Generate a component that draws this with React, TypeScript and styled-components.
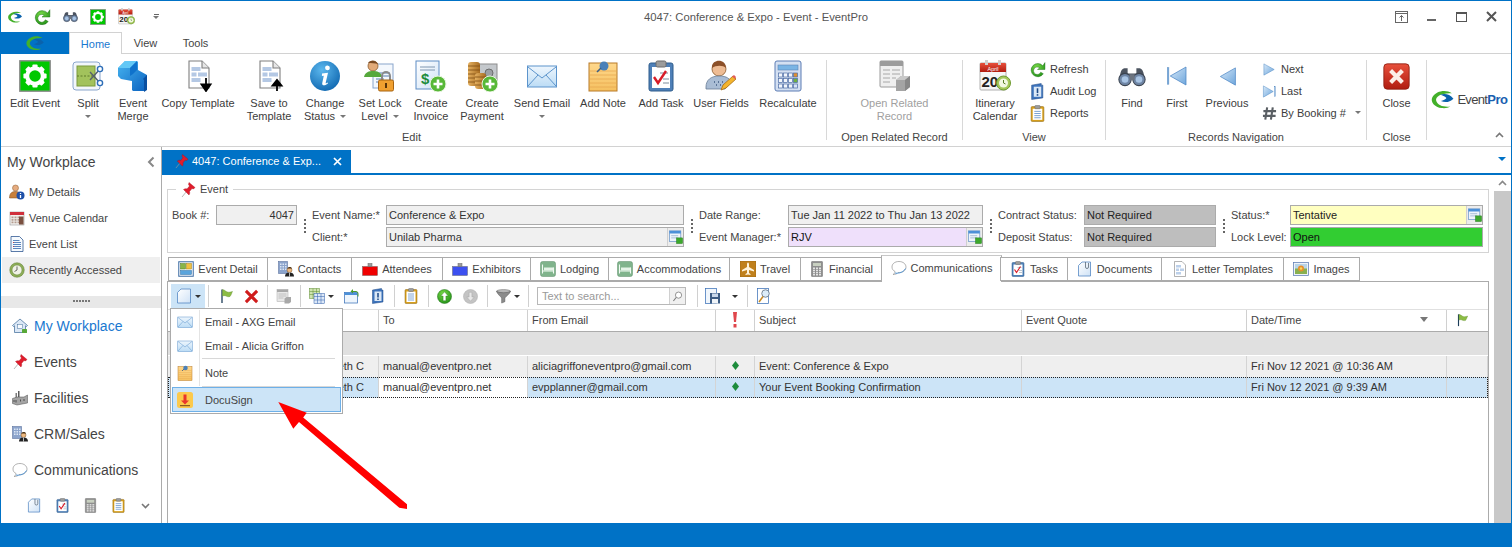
import React from "react";
import styled, { createGlobalStyle } from "styled-components";

const BLUE = "#0072c6";
const TEXT = "#3c3c3c";
const LINE = "#ababab";

const Global = createGlobalStyle`
  html, body { margin: 0; padding: 0; width: 1512px; height: 547px; overflow: hidden; background: #fff; }
  body { font-family: "Liberation Sans", Arial, sans-serif; font-size: 11px; color: ${TEXT}; }
  * { box-sizing: border-box; }
  svg { display: block; flex: none; }
`;

/* ---------- shared svg wrapper ---------- */
type IP = { s?: number };
const V: React.FC<{ s?: number; children: React.ReactNode }> = ({ s = 32, children }) => (
  <svg width={s} height={s} viewBox="0 0 32 32">{children}</svg>
);

const Defs = styled.svg`position: absolute; width: 0; height: 0;`;
const GradientDefs = () => (
  <Defs>
    <defs>
      <linearGradient id="gTri" x1="0" y1="0" x2="1" y2="1"><stop offset="0" stopColor="#d6e8f8" /><stop offset="1" stopColor="#6ea6dc" /></linearGradient>
      <linearGradient id="gMail" x1="0" y1="0" x2="0" y2="1"><stop offset="0" stopColor="#eef6fd" /><stop offset="1" stopColor="#bcdcf5" /></linearGradient>
      <linearGradient id="gNote" x1="0" y1="0" x2="0" y2="1"><stop offset="0" stopColor="#ffd88c" /><stop offset="1" stopColor="#f5c060" /></linearGradient>
      <radialGradient id="gInfo" cx=".4" cy=".3" r=".8"><stop offset="0" stopColor="#5cb8ee" /><stop offset="1" stopColor="#0a62ac" /></radialGradient>
      <radialGradient id="gGreen" cx=".4" cy=".3" r=".8"><stop offset="0" stopColor="#78d848" /><stop offset="1" stopColor="#1d8c14" /></radialGradient>
      <linearGradient id="gRed" x1="0" y1="0" x2="0" y2="1"><stop offset="0" stopColor="#e8503c" /><stop offset="1" stopColor="#b01c10" /></linearGradient>
      <linearGradient id="gCube" x1="0" y1="0" x2="1" y2="1"><stop offset="0" stopColor="#46b4f0" /><stop offset="1" stopColor="#0b62c0" /></linearGradient>
      <linearGradient id="gDoc" x1="0" y1="0" x2="1" y2="1"><stop offset="0" stopColor="#ffffff" /><stop offset="1" stopColor="#cfe2f6" /></linearGradient>
      <linearGradient id="gGold" x1="0" y1="0" x2="1" y2="0"><stop offset="0" stopColor="#e4b060" /><stop offset="1" stopColor="#a86c20" /></linearGradient>
    </defs>
  </Defs>
);

/* ---------- icons ---------- */
const GearBox = ({ s = 32 }: IP) => (
  <V s={s}>
    <rect x=".8" y=".8" width="30.4" height="30.4" fill="#00c800" stroke="#8c8c8c" strokeWidth="1.4" />
    <g fill="#fff">
      {[0, 45, 90, 135, 180, 225, 270, 315].map((a) => (
        <rect key={a} x="13.4" y="4.4" width="5.2" height="6" rx="1" transform={`rotate(${a} 16 16)`} />
      ))}
    </g>
    <circle cx="16" cy="16" r="7.8" fill="#00c800" stroke="#fff" strokeWidth="4" />
  </V>
);
const Swirl = ({ s = 32 }: IP) => (
  <V s={s}>
    <path d="M28 8C20 3 8 5 3 13c-3 6 3 13 12 14 4 .5 8 0 11-2-8 1-16-1-18-7C6 12 16 7 28 8Z" fill="#43b02a" />
    <path d="M13 10c6-2 12-1 17 5-5 5-11 5-16 3 3-1 6-2 7-4-2-2-5-3-8-4Z" fill="#0a62ac" />
  </V>
);
const Split = ({ s = 32 }: IP) => (
  <V s={s}>
    <rect x="1" y="2" width="27" height="28" rx="3" fill="#f2f6fb" stroke="#8aa6cc" />
    <rect x="5" y="6" width="18" height="20" fill="#a2c25c" stroke="#7b9a3c" />
    <path d="M5 16h18" stroke="#5d7a28" strokeDasharray="2 1.5" />
    <path d="M18 20 29 8M18 12l11 12" stroke="#55606c" strokeWidth="1.4" />
    <circle cx="28" cy="9" r="2.6" fill="#fff" stroke="#2f6fb8" strokeWidth="1.4" />
    <circle cx="28" cy="23" r="2.6" fill="#fff" stroke="#2f6fb8" strokeWidth="1.4" />
  </V>
);
const Merge = ({ s = 32 }: IP) => (
  <V s={s}>
    <path d="M1 8l7-7h12l1 1v8l9 5v14l-3 2H16l-1-1v-9L4 19 1 16Z" fill="url(#gCube)" />
    <path d="M1 8l7-7h12l-7 7Z" fill="#62c8f6" />
    <path d="M13 8l7-7v9l-4 4-3 2Z" fill="#0f72cc" />
    <path d="M26 19l4-4v15l-3 2V20Z" fill="#0a4fa0" />
  </V>
);
const TemplateDoc = ({ s = 32, up }: IP & { up?: boolean }) => (
  <V s={s}>
    <path d="M7 1h13l7 7v20H7Z" fill="#fff" stroke="#7f7f7f" strokeWidth="1.1" />
    <path d="M20 1v7h7" fill="#e6e6e6" stroke="#7f7f7f" strokeWidth="1.1" />
    <path d="M9.5 7h9v4h-9ZM9.5 12.5h5v4h-5ZM16 12.5h9v4h-9ZM9.5 18h9v4h-9Z" fill="#b4c8e4" />
    <path d={up ? "M24 31V21M19.5 25.5 24 20l4.5 5.5Z" : "M24 18v10M19.5 24.5 24 31l4.5-6.5Z"} stroke="#000" strokeWidth="1.8" fill="#000" />
  </V>
);
const InfoBall = ({ s = 32 }: IP) => (
  <V s={s}>
    <circle cx="16" cy="16" r="15" fill="url(#gInfo)" />
    <path d="M18.5 5.5a2.4 2.4 0 1 1-.1 4.8 2.4 2.4 0 0 1 .1-4.8ZM13 13.6l6-.9-2.3 10c-.2.9.5 1 1.8-.1l.6.7c-2.3 2.4-6.3 3.1-5.9 0l1.6-7.5-1.900.1Z" fill="#fff" />
  </V>
);
const LockDoc = ({ s = 32 }: IP) => (
  <V s={s}>
    <rect x="9" y="4" width="20" height="24" fill="#f4f8fd" stroke="#8aa6cc" />
    <path d="M12 13h14M12 16h14M12 19h8M12 22h8" stroke="#5a7fb0" />
    <circle cx="9" cy="6" r="5" fill="#e2aa78" stroke="#8b5a2b" strokeWidth=".8" />
    <path d="M4 3c2-3 8-3 10 1-3-1-7-1-10-1Z" fill="#7a4a22" />
    <path d="M0 17c1-5 5-6 9-6s8 1 9 6Z" fill="#56a83c" />
    <path d="M18 20v-4a4 4 0 0 1 8 0v4" fill="none" stroke="#8a8a8a" strokeWidth="2" />
    <rect x="14.5" y="20" width="15" height="11" rx="1.5" fill="#f0a030" stroke="#a86410" />
    <rect x="21" y="23" width="2" height="5" fill="#5a3408" />
  </V>
);
const DollarDoc = ({ s = 32 }: IP) => (
  <V s={s}>
    <rect x="1" y="1" width="23" height="28" fill="url(#gDoc)" stroke="#5c8cc4" />
    <path d="M5 7h15M5 10h15" stroke="#7f96b0" />
    <text x="6" y="24" fontFamily="Liberation Sans" fontWeight="700" fontSize="15" fill="#1d8c3c">$</text>
    <circle cx="23" cy="24" r="8" fill="#58b838" stroke="#e8f4e0" />
    <path d="M23 19.5v9M18.5 24h9" stroke="#fff" strokeWidth="2.6" />
  </V>
);
const Coins = ({ s = 32 }: IP) => (
  <V s={s}>
    <rect x="13" y="4" width="18" height="20" fill="#c4c8cc" stroke="#8c8c8c" />
    <circle cx="23" cy="13" r="4" fill="#9ca0a4" stroke="#6c6c6c" />
    <rect x="2" y="2" width="12" height="24" rx="3" fill="url(#gGold)" />
    <path d="M2 6h12M2 10h12M2 14h12M2 18h12M2 22h12" stroke="#7d4c12" strokeWidth=".8" />
    <rect x="9" y="13" width="11" height="16" rx="3" fill="url(#gGold)" />
    <path d="M9 17h11M9 21h11M9 25h11" stroke="#7d4c12" strokeWidth=".8" />
    <circle cx="24" cy="24" r="8" fill="#58b838" stroke="#e8f4e0" />
    <path d="M24 19.5v9M19.5 24h9" stroke="#fff" strokeWidth="2.6" />
  </V>
);
const Envelope = ({ s = 32 }: IP) => (
  <V s={s}>
    <rect x="1.5" y="6" width="29" height="21" fill="url(#gMail)" stroke="#5c94cc" />
    <path d="M2 7l14 11L30 7M2 26l10-11M30 26 20 15" fill="none" stroke="#5c94cc" />
  </V>
);
const Note = ({ s = 32 }: IP) => (
  <V s={s}>
    <rect x="2" y="3" width="28" height="28" fill="url(#gNote)" stroke="#b87a28" />
    <path d="M3 11h26M3 15h26M3 19h26M3 23h26M3 27h26" stroke="#e8a850" strokeWidth=".8" />
    <circle cx="17" cy="6" r="4.5" fill="#4a80b8" />
    <path d="M14 8l-4 4" stroke="#3a5e86" strokeWidth="1.6" />
  </V>
);
const Clipboard = ({ s = 32, check }: IP & { check?: boolean }) => (
  <V s={s}>
    <rect x="4" y="3" width="24" height="28" rx="2" fill={check ? "#4f80b8" : "#d8a01c"} stroke={check ? "#2f5c8c" : "#8c6410"} />
    <rect x="7" y="7" width="18" height="21" fill="#fff" />
    <rect x="11" y="1" width="10" height="6" rx="1.5" fill="#9c9c9c" stroke="#6c6c6c" />
    {check ? (
      <>
        <path d="M15 13h8M18 19h6M18 23h6" stroke="#7c8c9c" />
        <path d="M9 17l4 6 8-12" fill="none" stroke="#d81c28" strokeWidth="2.4" />
      </>
    ) : (
      <path d="M10 12h12M10 16h12M10 20h12M10 24h12" stroke="#5a8cc8" strokeWidth="1.5" />
    )}
  </V>
);
const UserPencil = ({ s = 32 }: IP) => (
  <V s={s}>
    <circle cx="14" cy="9" r="7" fill="#eebc94" stroke="#8b5a2b" strokeWidth=".8" />
    <path d="M7 8c-1-9 14-10 14 0-3-3-10-3-14 0Z" fill="#8c5028" />
    <path d="M1 27c0-7 5-11 13-11s11 3 12 6l-6 7H1Z" fill="#a9bcd4" stroke="#687c96" strokeWidth=".8" />
    <path d="M9 22h1M13 22h1M17 22h1M11 25h1M15 25h1" stroke="#3f5a80" strokeWidth="1.4" />
    <path d="M16 30l2-5 10-9 3 3-10 9Z" fill="#f4b42c" stroke="#a86c10" strokeWidth=".8" />
    <path d="M27 16.5l2-1.5 2 2-1 2Z" fill="#e05c5c" />
  </V>
);
const Calculator = ({ s = 32 }: IP) => (
  <V s={s}>
    <rect x="3" y="1" width="26" height="30" rx="2" fill="#d4e0f2" stroke="#5c7cb4" />
    <rect x="6" y="5" width="20" height="5" fill="#7ab4e4" stroke="#5c84b4" strokeWidth=".6" />
    {[0, 1, 2, 3].map((c) => [0, 1, 2].map((r) => (
      <rect key={`${c}${r}`} x={6.5 + c * 5} y={13 + r * 5.5} width="4" height="4" fill={c === 3 ? (r === 0 ? "#e09030" : r === 1 ? "#70b040" : "#d8e4f4") : "#f2f6fc"} stroke="#4c6ca4" strokeWidth=".7" />
    )))}
  </V>
);
const RelatedRecord = ({ s = 32 }: IP) => (
  <V s={s}>
    <rect x="1" y="1" width="23" height="26" rx="1" fill="#efefef" stroke="#9a9a9a" />
    <rect x="1" y="1" width="23" height="5" fill="#9c9c9c" />
    <path d="M4 10h7M13 10h8M4 14h7M13 14h8M4 18h7M13 18h4M4 22h7" stroke="#a8a8a8" />
    <path d="M17 20l5-4h9v11l-5 4h-9Z" fill="#a4a4a4" />
    <path d="M17 20l5-4h9l-5 4Z" fill="#c8c8c8" />
    <path d="M26 20l5-4v11l-5 4Z" fill="#888" />
  </V>
);
const CalendarClock = ({ s = 32 }: IP) => (
  <V s={s}>
    <rect x="1" y="3" width="26" height="27" rx="1" fill="#f6f6f6" stroke="#b0b0b0" />
    <path d="M1 4a1 1 0 0 1 1-1h24a1 1 0 0 1 1 1v8H1Z" fill="url(#gRed)" />
    <rect x="6" y="0" width="3" height="5" fill="#d0d0d0" />
    <rect x="19" y="0" width="3" height="5" fill="#d0d0d0" />
    <text x="14" y="11" fontFamily="Liberation Sans" fontSize="5.5" fill="#fff" textAnchor="middle">April</text>
    <text x="2.5" y="27" fontFamily="Liberation Sans" fontWeight="700" fontSize="15" fill="#222">20</text>
    <circle cx="24.5" cy="23" r="7" fill="#a4c85c" stroke="#6f9a30" />
    <circle cx="24.5" cy="23" r="4.5" fill="#f2f8e4" />
    <path d="M24.5 20v3l2 1" stroke="#5a7f28" fill="none" />
  </V>
);
const Refresh = ({ s = 32 }: IP) => (
  <V s={s}>
    <path d="M26 9A12.500 12.500 0 1 0 27 24l-5-3a7 7 0 1 1-2-8l-4 3h14V3l-4 6Z" fill="url(#gGreen)" stroke="#146a10" strokeWidth=".8" />
  </V>
);
const AuditBook = ({ s = 32 }: IP) => (
  <V s={s}>
    <path d="M5 4l18-3v3h3v24l-21 3Z" fill="#3e74bc" stroke="#1c4886" />
    <rect x="9" y="7" width="14" height="19" fill="#dbe8f6" />
    <path d="M16 10v9" stroke="#1c4886" strokeWidth="3" />
    <path d="M16 21v3" stroke="#1c4886" strokeWidth="3" />
  </V>
);
const Binoculars = ({ s = 32 }: IP) => (
  <V s={s}>
    <path d="M3 12c1-4 3-5 5-5h3v6h10V7h3c2 0 4 1 5 5l2 8H1Z" fill="#4c5460" />
    <circle cx="8" cy="20" r="7" fill="#6f86a6" stroke="#3c4450" strokeWidth="1.2" />
    <circle cx="24" cy="20" r="7" fill="#6f86a6" stroke="#3c4450" strokeWidth="1.2" />
    <circle cx="8" cy="20" r="3.8" fill="#a8c4e4" />
    <circle cx="24" cy="20" r="3.8" fill="#a8c4e4" />
    <rect x="13" y="14" width="6" height="7" fill="#6c7480" />
  </V>
);
const Tri = ({ s = 32, dir, bar }: IP & { dir: "l" | "r"; bar?: boolean }) => (
  <V s={s}>
    {dir === "l" ? (
      <>
        {bar && <rect x="3" y="5" width="2.2" height="22" fill="#7eacdc" stroke="#4c82bc" strokeWidth=".5" />}
        <path d={bar ? "M7 16 28 4v24Z" : "M6 16 27 4v24Z"} fill="url(#gTri)" stroke="#4c86c4" />
      </>
    ) : (
      <>
        {bar && <rect x="26.5" y="5" width="2.2" height="22" fill="#7eacdc" stroke="#4c82bc" strokeWidth=".5" />}
        <path d={bar ? "M3 4l21 12L3 28Z" : "M4 4l22 12L4 28Z"} fill="url(#gTri)" stroke="#4c86c4" />
      </>
    )}
  </V>
);
const Hash = ({ s = 32 }: IP) => (
  <V s={s}>
    <path d="M11 3 7 29M23 3l-4 26M3 11h27M2 21h27" stroke="#5a5f64" strokeWidth="4.5" />
  </V>
);
const CloseBox = ({ s = 32 }: IP) => (
  <V s={s}>
    <rect x="1" y="1" width="30" height="30" rx="4" fill="url(#gRed)" stroke="#8c1c10" />
    <path d="M9 9l14 14M23 9 9 23" stroke="#fbeee8" strokeWidth="5" />
  </V>
);
const Pin = ({ s = 32 }: IP) => (
  <V s={s}>
    <path d="M4 30l9-11" stroke="#9a9a9a" strokeWidth="1.4" />
    <path d="M18 1l12 10-3 3-3-1-5 6c1 3 0 5-1 7L7 15c3-2 5-2 7-1l5-6-2-3Z" fill="#e01c2c" stroke="#a80c18" strokeWidth=".8" />
  </V>
);
const PersonInfo = ({ s = 32 }: IP) => (
  <V s={s}>
    <circle cx="13" cy="8" r="6" fill="#e6ac80" stroke="#8b5a2b" />
    <path d="M1 28c0-10 5-13 12-13 4 0 7 1 9 4v9Z" fill="#c8803c" stroke="#7c4c1c" />
    <circle cx="23" cy="23" r="8" fill="#1e50a8" />
    <path d="M23 18v2M23 22v6" stroke="#fff" strokeWidth="2.6" />
  </V>
);
const VenueCal = ({ s = 32 }: IP) => (
  <V s={s}>
    <rect x="2" y="4" width="28" height="26" fill="#f2f0ee" stroke="#888" />
    <rect x="2" y="4" width="28" height="6" fill="#d0303c" />
    {[8, 14, 20].map((x) => [13, 18, 23].map((y) => <rect key={`${x}${y}`} x={x - 3} y={y} width="4" height="3.5" fill="#b49c90" />))}
    <rect x="20" y="13" width="9" height="16" fill="#7a5040" />
  </V>
);
const ListDoc = ({ s = 32 }: IP) => (
  <V s={s}>
    <path d="M4 1h17l7 7v23H4Z" fill="#f6fafe" stroke="#25508c" strokeWidth="1.5" />
    <path d="M8 9h13M8 13h16M8 17h16M8 21h16M8 25h16" stroke="#2a5fa8" strokeWidth="1.5" />
    <path d="M8 13h2M8 21h2" stroke="#d0282c" strokeWidth="1.5" />
  </V>
);
const ClockRing = ({ s = 32 }: IP) => (
  <V s={s}>
    <circle cx="16" cy="16" r="14.5" fill="#8eae58" stroke="#5c7c30" />
    <circle cx="16" cy="16" r="10" fill="#f0f2e6" stroke="#5c7c30" />
    <path d="M16 9v7l-5 3" fill="none" stroke="#444" strokeWidth="1.6" />
  </V>
);
const House = ({ s = 32 }: IP) => (
  <V s={s}>
    <path d="M1 15 16 2l15 13-2 2-2-1.5V29H5V15.5L3 17Z" fill="#dce8f6" stroke="#44709c" strokeWidth="1.5" />
    <rect x="11" y="13" width="10" height="8" fill="#f8fbfe" stroke="#44709c" />
    <rect x="20" y="22" width="10" height="8" rx="1" fill="#58a838" />
  </V>
);
const Factory = ({ s = 32 }: IP) => (
  <V s={s}>
    <rect x="12" y="2" width="3" height="14" fill="#5c5c5c" />
    <rect x="7" y="6" width="3" height="10" fill="#7c7c7c" />
    <path d="M1 17 10 14h14l7-4v16L10 30 1 27Z" fill="#a4a4a4" stroke="#4c4c4c" />
    <path d="M4 20v4M8 20v5M17 19v4M24 18v4" stroke="#333" strokeWidth="1.5" />
  </V>
);
const Crm = ({ s = 32 }: IP) => (
  <V s={s}>
    <rect x="1" y="1" width="18" height="24" fill="#8ca4cc" stroke="#4c6494" />
    {[4, 9, 14].map((x) => [5, 10, 15].map((y) => <rect key={`${x}${y}`} x={x} y={y} width="3" height="3" fill="#dce6f4" />))}
    <circle cx="23" cy="18" r="5" fill="#ecb880" stroke="#7c5428" />
    <path d="M19 15c1-4 8-4 9 0Z" fill="#4c3418" />
    <path d="M14 31c0-5 3-8 9-8s9 3 9 8Z" fill="#222" />
    <path d="M23 23v8" stroke="#fff" strokeWidth="1.4" />
  </V>
);
const Bubble = ({ s = 32 }: IP) => (
  <V s={s}>
    <path d="M16 3C7 3 2 8 2 14c0 4 2 7 6 9 0 3-2 5-4 6 4 0 8-1 10-4 1 0 2 0 3 0 8 0 13-5 13-11S24 3 16 3Z" fill="#fff" stroke="#8a8a8a" strokeWidth="1.3" />
    <path d="M8 26c4 1 15 1 21-9" fill="none" stroke="#3a8cd8" strokeWidth="1.6" />
  </V>
);
const PageClip = ({ s = 32 }: IP) => (
  <V s={s}>
    <path d="M3 9l7-7h17v28H3Z" fill="url(#gDoc)" stroke="#4c82c0" strokeWidth="1.5" />
    <path d="M17 2v10a3 3 0 0 0 6 0V4" fill="none" stroke="#52606e" strokeWidth="1.5" />
  </V>
);
const BlankPage = ({ s = 32 }: IP) => (
  <V s={s}>
    <path d="M3 9l7-7h19v28H3Z" fill="url(#gDoc)" stroke="#4c82c0" strokeWidth="1.5" />
  </V>
);
const CalcGrey = ({ s = 32 }: IP) => (
  <V s={s}>
    <rect x="5" y="1" width="22" height="30" rx="1" fill="#8e8e8e" stroke="#6c6c6c" />
    <rect x="8" y="4" width="16" height="6" fill="#c8d0c0" />
    {[0, 1, 2].map((c) => [0, 1, 2, 3].map((r) => (
      <rect key={`${c}${r}`} x={8 + c * 6} y={13 + r * 4.3} width="4" height="3" fill="#e4e4e4" />
    )))}
  </V>
);
const DetailPanel = ({ s = 32 }: IP) => (
  <V s={s}>
    <rect x="1.5" y="1.5" width="29" height="29" fill="#f6f8fb" stroke="#3f6ea4" strokeWidth="2" />
    <rect x="5" y="5" width="10" height="11" fill="#88b448" stroke="#4c7c20" />
    <rect x="17" y="5" width="10" height="11" fill="#f0c040" stroke="#a88010" />
    <rect x="5" y="19" width="22" height="8" fill="#5aa4dc" stroke="#2c70a8" />
  </V>
);
const Badge = ({ s = 32, color }: IP & { color: string }) => (
  <V s={s}>
    <rect x="1" y="11" width="30" height="18" fill={color} stroke="#555" strokeWidth=".8" />
    <rect x="12" y="5" width="8" height="6" fill="#9c9c9c" stroke="#666" />
  </V>
);
const BedGreen = ({ s = 32 }: IP) => (
  <V s={s}>
    <rect x="1" y="1" width="30" height="30" rx="4" fill="#80b48c" stroke="#5c8c68" />
    <path d="M5 7v18M27 13v12M5 20h22" stroke="#f2fbf4" strokeWidth="2.2" />
    <rect x="8" y="13" width="19" height="6" fill="#e6f4e8" />
  </V>
);
const Plane = ({ s = 32 }: IP) => (
  <V s={s}>
    <rect x="0" y="0" width="32" height="32" fill="#c0801c" stroke="#8c5c10" />
    <path d="M16 3c1.5 0 2 2 2 4v5l10 6v3l-10-3v6l3 2v2l-5-1-5 1v-2l3-2v-6L4 21v-3l10-6V7c0-2 .5-4 2-4Z" fill="#fff4dc" />
  </V>
);
const LetterDoc = ({ s = 32 }: IP) => (
  <V s={s}>
    <path d="M5 1h15l7 7v23H5Z" fill="#fff" stroke="#8a8a8a" strokeWidth="1.3" />
    <path d="M8 8h10v5H8ZM8 15h6v5H8ZM16 15h8v5h-8ZM8 22h10v5H8Z" fill="#bcd0ea" />
  </V>
);
const Picture = ({ s = 32 }: IP) => (
  <V s={s}>
    <rect x="1" y="3" width="30" height="26" fill="#eef2f8" stroke="#5c7cb4" strokeWidth="1.5" />
    <rect x="4" y="6" width="24" height="20" fill="#88b050" />
    <rect x="4" y="6" width="24" height="9" fill="#b8d4e8" />
    <circle cx="16" cy="15" r="6" fill="#e8902c" />
    <circle cx="16" cy="15" r="2.5" fill="#f8d860" />
  </V>
);
const TableGrey = ({ s = 32 }: IP) => (
  <V s={s}>
    <rect x="2" y="3" width="22" height="24" fill="#e8e8e8" stroke="#a8a8a8" />
    <rect x="2" y="3" width="22" height="5" fill="#a8a8a8" />
    <path d="M5 12h16M5 16h16M5 20h10" stroke="#b0b0b0" strokeWidth="1.5" />
    <path d="M17 21l4-3h9v10l-4 3h-9Z" fill="#a8a8a8" />
  </V>
);
const TableGreen = ({ s = 32 }: IP) => (
  <V s={s}>
    <rect x="1" y="1" width="20" height="20" fill="#cfe4b0" stroke="#5c8c30" />
    <path d="M1 7h20M1 13h20M8 1v20M15 1v20" stroke="#5c8c30" />
    <rect x="10" y="11" width="21" height="20" fill="#dce8f8" stroke="#2c5ca8" />
    <path d="M10 17h21M10 24h21M17 11v20M24 11v20" stroke="#2c5ca8" />
  </V>
);
const WindowArrow = ({ s = 32 }: IP) => (
  <V s={s}>
    <rect x="1" y="9" width="26" height="21" fill="#eef5fc" stroke="#3c72b8" strokeWidth="1.5" />
    <rect x="1" y="9" width="26" height="5" fill="#4c90d8" />
    <path d="M14 7h10a4 4 0 0 1 4 4v6" fill="none" stroke="#4c9a2c" strokeWidth="2" />
    <path d="M18 2 13 7l5 4Z" fill="#4c9a2c" />
  </V>
);
const Flag = ({ s = 32 }: IP) => (
  <V s={s}>
    <path d="M8 3v27" stroke="#1c3c58" strokeWidth="2.6" />
    <path d="M9 3c5 1 6 4 10 5 3 1 6 0 10-1-2 4-2 6-5 10-4 1-6 0-8-1-2-1-4-1-7 0Z" fill="#8cbc44" stroke="#5c8c2c" strokeWidth=".8" />
  </V>
);
const XRed = ({ s = 32 }: IP) => (
  <V s={s}>
    <path d="M4 4l24 24M28 4 4 28" stroke="#d01c1c" strokeWidth="6.5" />
  </V>
);
const RoundArrow = ({ s = 32, up }: IP & { up?: boolean }) => (
  <V s={s}>
    {up ? (
      <>
        <circle cx="16" cy="16" r="15" fill="url(#gGreen)" stroke="#146a10" />
        <path d="M16 6l8 9h-5v10h-6V15H8Z" fill="#fff" stroke="#146a10" strokeWidth=".8" />
      </>
    ) : (
      <>
        <circle cx="16" cy="16" r="15" fill="#c4c4c4" stroke="#a8a8a8" />
        <path d="M16 26l8-9h-5V7h-6v10H8Z" fill="#e8e8e8" stroke="#999" strokeWidth=".8" />
      </>
    )}
  </V>
);
const Funnel = ({ s = 32 }: IP) => (
  <V s={s}>
    <ellipse cx="16" cy="5" rx="15" ry="4" fill="#b8b8b8" stroke="#6c6c6c" />
    <path d="M1 5c2 6 8 10 11 14v11l7-3v-8c3-4 10-8 12-14-6 4-24 4-30 0Z" fill="#8c8c8c" stroke="#555" />
  </V>
);
const Floppy = ({ s = 32 }: IP) => (
  <V s={s}>
    <rect x="1" y="1" width="22" height="30" fill="#f0f6fc" stroke="#3c72b8" strokeWidth="1.5" />
    <rect x="10" y="10" width="20" height="21" fill="#3c5c84" />
    <rect x="14" y="11" width="12" height="7" fill="#c8d8ec" />
    <rect x="14" y="22" width="12" height="9" fill="#f0f4f8" />
  </V>
);
const SearchDoc = ({ s = 32 }: IP) => (
  <V s={s}>
    <rect x="3" y="1" width="22" height="30" fill="#fff" stroke="#3c72b8" strokeWidth="1.5" />
    <circle cx="19" cy="11" r="7.5" fill="#dcecf8" stroke="#6c7c8c" strokeWidth="1.8" />
    <path d="M14 17 6 28" stroke="#c88820" strokeWidth="3" />
  </V>
);
const Magnifier = ({ s = 32 }: IP) => (
  <V s={s}>
    <circle cx="19" cy="12" r="9" fill="#fff" stroke="#7c7c7c" strokeWidth="2.4" />
    <path d="M12 19 4 29" stroke="#7c7c7c" strokeWidth="3.2" />
  </V>
);
const DocuSignIcon = ({ s = 32 }: IP) => (
  <V s={s}>
    <rect x="0" y="0" width="32" height="32" rx="5" fill="#fcc94c" />
    <path d="M13 5h6v12h5l-8 8-8-8h5Z" fill="#e8352c" />
    <rect x="6" y="26" width="20" height="2.5" fill="#8c5c20" />
  </V>
);
const Lookup = () => (
  <V s={14}>
    <rect x="1" y="2" width="26" height="24" fill="#eef4fb" stroke="#5c8cc4" strokeWidth="1.5" />
    <rect x="1" y="2" width="26" height="6" fill="#4c90d8" />
    <path d="M5 13h16M5 18h16" stroke="#8ca8c8" strokeWidth="1.6" />
    <rect x="17" y="18" width="14" height="13" fill="#3ca82c" stroke="#207818" />
  </V>
);
const ExMark = () => (
  <svg width="6" height="16" viewBox="0 0 6 16">
    <path d="M1 0h4L4 10H2Z" fill="#e0464c" />
    <rect x="1.5" y="12" width="3" height="3.5" fill="#e0464c" />
  </svg>
);
const Diamond = () => (
  <svg width="7" height="9" viewBox="0 0 7 9"><path d="M3.5 0 7 4.5 3.5 9 0 4.5Z" fill="#1d8c3c" /></svg>
);
const Caret = styled.span<{ $dark?: boolean }>`
  display: inline-block; width: 0; height: 0; flex: none;
  border-left: 3px solid transparent; border-right: 3px solid transparent;
  border-top: 3px solid ${(p) => (p.$dark ? "#333" : "#777")};
`;

/* ---------- window frame ---------- */
const Win = styled.div`
  position: relative; width: 1512px; height: 547px; display: flex; flex-direction: column;
  border-top: 1px solid ${BLUE}; border-left: 1px solid ${BLUE}; border-right: 1px solid ${BLUE}; overflow: hidden; background: #fff;
`;
const TitleBar = styled.div`
  height: 31px; flex: none; display: grid; grid-template-columns: 1fr auto 1fr; align-items: center;
`;
const Qat = styled.div`display: flex; align-items: center; padding-left: 3px;`;
const QatSlot = styled.div<{ $w: number }>`width: ${(p) => p.$w}px; display: flex; justify-content: center; align-items: center;`;
const QatMenu = styled.div`display: flex; flex-direction: column; align-items: center; gap: 1px; width: 16px;`;
const QatDash = styled.span`width: 5px; height: 1px; background: #666;`;
const Title = styled.div`font-size: 11.25px; color: #555;`;
const WinControls = styled.div`display: flex; justify-content: flex-end; align-items: center; padding-right: 5px;`;
const WinBtn = styled.div`width: 30px; display: flex; justify-content: center;`;

const TabRow = styled.div`
  height: 22px; flex: none; display: flex; border-bottom: 1px solid #d2d2d2;
`;
const FileTab = styled.div`
  width: 68px; margin-bottom: -1px; background: ${BLUE}; display: flex; justify-content: center; align-items: center; overflow: hidden;
`;
const RibbonTab = styled.div<{ $on?: boolean; $w: number }>`
  width: ${(p) => p.$w}px; display: flex; justify-content: center; align-items: center; font-size: 11px;
  color: ${(p) => (p.$on ? "#1a78d0" : "#444")}; background: #fff;
  ${(p) => p.$on && "border: 1px solid #d2d2d2; border-bottom: 0; margin-bottom: -1px;"}
`;

const Ribbon = styled.div`
  height: 93px; flex: none; display: flex; border-bottom: 1px solid #d2d2d2; padding-top: 6px;
`;
const Group = styled.div<{ $w: number; $pad?: number; $last?: boolean }>`
  width: ${(p) => p.$w}px; height: 80px; flex: none; display: flex; flex-direction: column;
  padding-left: ${(p) => p.$pad ?? 0}px;
  ${(p) => !p.$last && "border-right: 1px solid #d8d8d8;"}
`;
const GroupBody = styled.div`height: 71px; flex: none; display: flex;`;
const GroupLabel = styled.div<{ $l?: number; $r?: number }>`
  height: 13px; line-height: 13px; flex: none; text-align: center; color: #444;
  margin-left: ${(p) => p.$l ?? 0}px; margin-right: ${(p) => p.$r ?? 0}px;
`;
const LargeBtn = styled.div<{ $w: number; $off?: boolean }>`
  width: ${(p) => p.$w}px; flex: none; display: flex; flex-direction: column; align-items: center;
  line-height: 13px; text-align: center; color: ${(p) => (p.$off ? "#a0a0a0" : "#3c3c3c")}; white-space: nowrap;
`;
const LargeIcon = styled.div`height: 32px; margin-bottom: 5px; display: flex; justify-content: center; align-items: center;`;
const CaretLine = styled.div`height: 13px; display: flex; align-items: center; justify-content: center;`;
const InlineCaret = styled(Caret)`margin: 0 0 2px 5px; vertical-align: middle;`;
const SmallCol = styled.div<{ $ml: number }>`margin: -2px 0 0 ${(p) => p.$ml}px; display: flex; flex-direction: column;`;
const SmallBtn = styled.div`height: 22px; display: flex; align-items: center; gap: 4px; white-space: nowrap; color: #3c3c3c;`;
const LogoCell = styled.div`
  flex: 1; position: relative; display: flex; align-items: center; justify-content: center; height: 80px; padding: 0 0 2px 0;
`;
const LogoMark = styled.div`display: flex; align-items: center; gap: 2px;`;
const LogoEvent = styled.span`font-size: 13px; letter-spacing: -.7px; color: #444;`;
const LogoPro = styled.b`color: #1a5fb0; font-size: 13px; letter-spacing: -.4px;`;
const Collapse = styled.svg`position: absolute; right: 7px; bottom: 2px;`;

/* ---------- workspace ---------- */
const Work = styled.div`flex: 1; min-height: 0; display: flex;`;
const Side = styled.aside`width: 161px; flex: none; border-right: 1px solid ${LINE}; display: flex; flex-direction: column;`;
const SideHead = styled.div`
  height: 32px; flex: none; display: flex; align-items: center; justify-content: space-between;
  padding: 0 6px 3px 6px; font-size: 14px; color: #444;
`;
const SideList = styled.div`display: flex; flex-direction: column; margin-bottom: 13px;`;
const SideItem = styled.div<{ $on?: boolean }>`
  height: 26px; display: flex; align-items: center; gap: 4px; padding-left: 7px; margin: 0 1px;
  background: ${(p) => (p.$on ? "#efefef" : "transparent")}; color: #444;
`;
const Splitter = styled.div`height: 12px; flex: none; background: #e8e8e8; display: flex; justify-content: center; align-items: flex-start; padding-top: 4px; gap: 1px;`;
const Dot = styled.span`width: 2px; height: 2px; background: #777;`;
const NavList = styled.nav`display: flex; flex-direction: column;`;
const NavItem = styled.div<{ $on?: boolean }>`
  height: 36px; display: flex; align-items: center; gap: 6px; padding-left: 11px; font-size: 14px;
  color: ${(p) => (p.$on ? "#1a78d0" : "#444")};
`;
const NavMini = styled.div`display: flex; align-items: center; gap: 13px; padding: 10px 11px 0 26px;`;
const NavMore = styled.svg`margin-left: auto;`;

const Main = styled.main`flex: 1; min-width: 0; display: flex; flex-direction: column;`;
const DocStrip = styled.div`
  height: 28px; flex: none; border-bottom: 2px solid ${BLUE}; display: flex; align-items: flex-end; justify-content: space-between; padding-right: 5px;
`;
const DocTab = styled.div`
  width: 189px; height: 23px; background: ${BLUE}; color: #fff; display: flex; align-items: center; padding: 0 9px 1px 12px; gap: 3px; font-size: 11px;
`;
const DocTabText = styled.span`flex: 1; white-space: nowrap;`;
const DocMenu = styled(Caret)`border-top-color: ${BLUE}; margin-bottom: 12px; border-left-width: 4px; border-right-width: 4px; border-top-width: 4px;`;
const WorkRow = styled.div`flex: 1; min-height: 0; display: flex;`;
const Content = styled.div`flex: 1; min-width: 0; display: flex; flex-direction: column; padding: 0 5px;`;
const Scroll = styled.div`width: 17px; flex: none; display: flex; flex-direction: column;`;
const ScrollUp = styled.div`height: 16px; display: flex; align-items: center; justify-content: center;`;
const ScrollThumb = styled.div`flex: 1; background: #c8c8c8;`;

const Fieldset = styled.fieldset`
  margin: 7px 0 0; padding: 0 4px 0 4px; height: 71px; border: 1px solid #d4d4d4; min-width: 0;
`;
const Legend = styled.legend`
  margin-left: 4px; padding: 0 5px 0 4px; display: flex; align-items: center; gap: 4px; line-height: 15px; height: 15px; color: #444; font-size: 11px;
`;
const FieldRow = styled.div`display: flex; margin-top: 8px;`;
const FieldCol = styled.div<{ $l: number; $i: number }>`
  display: grid; grid-template-columns: ${(p) => p.$l}px ${(p) => p.$i}px; grid-auto-rows: 20px; row-gap: 2px; align-items: center;
`;
const FieldLabel = styled.div`white-space: nowrap; color: #444;`;
const Input = styled.div<{ $bg?: string; $right?: boolean; $ink?: string }>`
  height: 20px; border: 1px solid ${LINE}; background: ${(p) => p.$bg ?? "#f0f0f0"}; display: flex; align-items: center;
  color: ${(p) => p.$ink ?? "#333"}; padding-left: 2px; ${(p) => p.$right && "justify-content: flex-end; padding-right: 2px;"}
`;
const InputText = styled.span`flex: 1; white-space: nowrap;`;
const LookupBtn = styled.div`width: 16px; height: 18px; background: #ececec; border-left: 1px solid #d0d0d0; display: flex; align-items: center; justify-content: center;`;
const Grip = styled.div`width: 15px; display: flex; flex-direction: column; align-items: center; gap: 2px; padding-top: 14px;`;
const GripDot = styled.span`width: 2px; height: 2px; background: #666;`;

const TabStrip = styled.div`height: 26px; flex: none; margin-top: 2px; display: flex; align-items: flex-end; padding-left: 1px; position: relative; z-index: 1;`;
const PageTab = styled.div<{ $w: number; $on?: boolean; $first?: boolean }>`
  width: ${(p) => p.$w}px; flex: none; display: flex; align-items: center; justify-content: center; gap: 4px; white-space: nowrap;
  height: ${(p) => (p.$on ? 27 : 24)}px; background: #fff; color: #444;
  border: 1px solid ${LINE}; margin-left: ${(p) => (p.$first ? 0 : -1)}px;
  ${(p) => p.$on && "border-bottom: 0; margin-bottom: -1px; padding-bottom: 2px; border-top-color: #c8c8c8; margin-right: -1px;"}
`;
const Panel = styled.div`flex: 1; min-height: 0; border: 1px solid ${LINE}; border-bottom: 0; display: flex; flex-direction: column; position: relative;`;

const Toolbar = styled.div`height: 27px; flex: none; display: flex; align-items: center; padding: 1px 0 0 3px;`;
const ToolBtn = styled.div<{ $w: number; $on?: boolean }>`
  width: ${(p) => p.$w}px; height: 25px; flex: none; display: flex; align-items: center; justify-content: center; gap: 3px;
  background: ${(p) => (p.$on ? "#cce4f7" : "transparent")};
`;
const ToolSep = styled.span<{ $ml?: number }>`width: 1px; height: 22px; flex: none; background: #d0d0d0; margin-left: ${(p) => p.$ml ?? 0}px;`;
const Search = styled.div`
  width: 149px; height: 18px; flex: none; margin-left: 8px; border: 1px solid #b8b8b8; display: flex; align-items: center; padding-left: 4px; color: #999;
`;
const SearchBtn = styled.div`width: 16px; height: 16px; border-left: 1px solid #d0d0d0; background: #f0f0f0; display: flex; align-items: center; justify-content: center;`;

const GridHead = styled.div`
  display: grid; grid-template-columns: var(--cols); height: 23px; flex: none; border-top: 1px solid #e0e0e0; border-bottom: 1px solid ${LINE};
`;
const HeadCell = styled.div<{ $center?: boolean; $flag?: boolean }>`
  display: flex; align-items: center; justify-content: ${(p) => (p.$center ? "center" : "space-between")};
  padding: 0 4px 2px; border-right: 1px solid #d0d0d0; color: #444;
  ${(p) => p.$flag && "border-right: 0; padding-left: 8px;"}
`;
const SortCaret = styled(Caret)`margin-right: 14px; border-left-width: 4px; border-right-width: 4px; border-top-width: 5px;`;
const GroupRow = styled.div`height: 23px; flex: none; background: #e0e0e0; margin-bottom: 1px;`;
const Row = styled.div<{ $sel?: boolean }>`
  display: grid; grid-template-columns: var(--cols); height: 21px; flex: none;
  background: ${(p) => (p.$sel ? "#cce4f7" : "#efefef")};
  ${(p) => p.$sel && "outline: 1px dotted #222; outline-offset: -1px;"}
`;
const Cell = styled.div<{ $white?: boolean; $center?: boolean; $end?: boolean }>`
  display: flex; align-items: center; padding: 0 4px 2px; white-space: nowrap; overflow: hidden; color: #333;
  border-right: 1px solid #d4d4d4;
  ${(p) => p.$white && "background: #fff;"}
  ${(p) => p.$center && "justify-content: center;"}
  ${(p) => p.$end && "justify-content: flex-end; padding-right: 14px;"}
`;
const GridWrap = styled.div`
  --cols: 211px 149px 188px 39px 267px 225px 200px 1fr;
  display: flex; flex-direction: column; flex: 1; min-height: 0;
`;

const Menu = styled.div`
  position: absolute; left: 2px; top: 26px; width: 173px; height: 106px; background: #fff; border: 1px solid ${LINE};
  display: flex; flex-direction: column; padding: 1px; z-index: 3;
`;
const MenuGutter = styled.span`position: absolute; left: 28px; top: 1px; bottom: 27px; width: 1px; background: #e4e4e4;`;
const MenuItem = styled.div<{ $on?: boolean; $h: number }>`
  height: ${(p) => p.$h}px; display: flex; align-items: center; gap: 12px; padding-left: 5px; flex: none; color: #444;
  ${(p) => (p.$on ? "background: #cce4f7; border: 1px solid #6eb0e8; padding-left: 4px; margin-top: auto;" : "")}
`;
const MenuRule = styled.div`height: 1px; background: #d8d8d8; margin: 0 6px 0 30px; flex: none;`;

const Arrow = styled.svg`position: absolute; left: 270px; top: 394px; z-index: 4;`;
const Status = styled.footer`height: 24px; flex: none; background: ${BLUE}; margin: 0 -1px;`;

const Lg: React.FC<{ w: number; icon: React.ReactNode; a: string; b?: string; caret?: "inline" | "line"; off?: boolean }> = ({ w, icon, a, b, caret, off }) => (
  <LargeBtn $w={w} $off={off}>
    <LargeIcon>{icon}</LargeIcon>
    <div>{a}</div>
    {b && <div>{b}{caret === "inline" && <InlineCaret />}</div>}
    {caret === "line" && <CaretLine><Caret /></CaretLine>}
  </LargeBtn>
);
const FieldGrip = () => (
  <Grip><GripDot /><GripDot /><GripDot /><GripDot /></Grip>
);

export default function App() {
  return (
    <>
      <Global />
      <GradientDefs />
      <Win>
        <TitleBar>
          <Qat>
            <QatSlot $w={22}><Swirl s={16} /></QatSlot>
            <QatSlot $w={32}><Refresh s={18} /></QatSlot>
            <QatSlot $w={24}><Binoculars s={15} /></QatSlot>
            <QatSlot $w={32}><GearBox s={16} /></QatSlot>
            <QatSlot $w={24}><CalendarClock s={17} /></QatSlot>
            <QatSlot $w={36}>
              <QatMenu><QatDash /><Caret /></QatMenu>
            </QatSlot>
          </Qat>
          <Title>4047: Conference &amp; Expo - Event - EventPro</Title>
          <WinControls>
            <WinBtn>
              <svg width="13" height="12" viewBox="0 0 13 12"><rect x=".5" y=".5" width="12" height="11" fill="none" stroke="#666" /><path d="M.5 2.5h12M6.5 10V4.5M4.5 6.5l2-2 2 2" fill="none" stroke="#666" /></svg>
            </WinBtn>
            <WinBtn><svg width="9" height="12" viewBox="0 0 9 12"><rect y="8" width="9" height="2" fill="#666" /></svg></WinBtn>
            <WinBtn><svg width="11" height="10" viewBox="0 0 11 10"><rect x=".5" y=".5" width="10" height="9" fill="none" stroke="#555" /><rect width="11" height="2" fill="#555" /></svg></WinBtn>
            <WinBtn><svg width="11" height="11" viewBox="0 0 11 11"><path d="M1 1l9 9M10 1l-9 9" stroke="#555" strokeWidth="2" /></svg></WinBtn>
          </WinControls>
        </TitleBar>

        <TabRow>
          <FileTab><Swirl s={20} /></FileTab>
          <RibbonTab $w={53} $on>Home</RibbonTab>
          <RibbonTab $w={47}>View</RibbonTab>
          <RibbonTab $w={53}>Tools</RibbonTab>
        </TabRow>

        <Ribbon>
          <Group $w={826} $pad={4}>
            <GroupBody>
              <Lg w={60} icon={<GearBox />} a="Edit Event" />
              <Lg w={46} icon={<Split />} a="Split" caret="line" />
              <Lg w={44} icon={<Merge />} a="Event" b="Merge" />
              <Lg w={86} icon={<TemplateDoc />} a="Copy Template" />
              <Lg w={56} icon={<TemplateDoc up />} a="Save to" b="Template" />
              <Lg w={56} icon={<InfoBall />} a="Change" b="Status" caret="inline" />
              <Lg w={54} icon={<LockDoc />} a="Set Lock" b="Level" caret="inline" />
              <Lg w={48} icon={<DollarDoc />} a="Create" b="Invoice" />
              <Lg w={54} icon={<Coins />} a="Create" b="Payment" />
              <Lg w={66} icon={<Envelope />} a="Send Email" caret="line" />
              <Lg w={56} icon={<Note />} a="Add Note" />
              <Lg w={60} icon={<Clipboard check />} a="Add Task" />
              <Lg w={60} icon={<UserPencil />} a="User Fields" />
              <Lg w={74} icon={<Calculator />} a="Recalculate" />
            </GroupBody>
            <GroupLabel $r={8}>Edit</GroupLabel>
          </Group>
          <Group $w={136}>
            <GroupBody>
              <Lg w={135} icon={<RelatedRecord />} a="Open Related" b="Record" off />
            </GroupBody>
            <GroupLabel>Open Related Record</GroupLabel>
          </Group>
          <Group $w={143} $pad={8}>
            <GroupBody>
              <Lg w={48} icon={<CalendarClock />} a="Itinerary" b="Calendar" />
              <SmallCol $ml={10}>
                <SmallBtn><Refresh s={17} />Refresh</SmallBtn>
                <SmallBtn><AuditBook s={17} />Audit Log</SmallBtn>
                <SmallBtn><Clipboard s={17} />Reports</SmallBtn>
              </SmallCol>
            </GroupBody>
            <GroupLabel $l={-8}>View</GroupLabel>
          </Group>
          <Group $w={261} $pad={4}>
            <GroupBody>
              <Lg w={44} icon={<Binoculars s={28} />} a="Find" />
              <Lg w={46} icon={<Tri s={24} dir="l" bar />} a="First" />
              <Lg w={54} icon={<Tri s={23} dir="l" />} a="Previous" />
              <SmallCol $ml={8}>
                <SmallBtn><Tri s={15} dir="r" />Next</SmallBtn>
                <SmallBtn><Tri s={15} dir="r" bar />Last</SmallBtn>
                <SmallBtn><Hash s={15} />By Booking #<InlineCaret /></SmallBtn>
              </SmallCol>
            </GroupBody>
            <GroupLabel $l={-4}>Records Navigation</GroupLabel>
          </Group>
          <Group $w={60}>
            <GroupBody>
              <Lg w={59} icon={<CloseBox s={27} />} a="Close" />
            </GroupBody>
            <GroupLabel>Close</GroupLabel>
          </Group>
          <LogoCell>
            <LogoMark>
              <Swirl s={25} />
              <span><LogoEvent>Event</LogoEvent><LogoPro>Pro</LogoPro></span>
            </LogoMark>
            <Collapse width="9" height="6" viewBox="0 0 9 6"><path d="M1 5l3.5-3.5L8 5" fill="none" stroke="#777" strokeWidth="1.6" /></Collapse>
          </LogoCell>
        </Ribbon>

        <Work>
          <Side>
            <SideHead>
              My Workplace
              <svg width="8" height="12" viewBox="0 0 8 12"><path d="M6.5 1.5 2 6l4.5 4.5" fill="none" stroke="#888" strokeWidth="2" /></svg>
            </SideHead>
            <SideList>
              <SideItem><PersonInfo s={16} />My Details</SideItem>
              <SideItem><VenueCal s={16} />Venue Calendar</SideItem>
              <SideItem><ListDoc s={16} />Event List</SideItem>
              <SideItem $on><ClockRing s={16} />Recently Accessed</SideItem>
            </SideList>
            <Splitter>{[0, 1, 2, 3, 4, 5].map((i) => <Dot key={i} />)}</Splitter>
            <NavList>
              <NavItem $on><House s={16} />My Workplace</NavItem>
              <NavItem><Pin s={16} />Events</NavItem>
              <NavItem><Factory s={16} />Facilities</NavItem>
              <NavItem><Crm s={16} />CRM/Sales</NavItem>
              <NavItem><Bubble s={16} />Communications</NavItem>
            </NavList>
            <NavMini>
              <PageClip s={15} />
              <Clipboard s={15} check />
              <CalcGrey s={15} />
              <Clipboard s={15} />
              <NavMore width="9" height="6" viewBox="0 0 9 6"><path d="M1 1l3.5 3.5L8 1" fill="none" stroke="#777" strokeWidth="1.6" /></NavMore>
            </NavMini>
          </Side>

          <Main>
            <DocStrip>
              <DocTab>
                <Pin s={15} />
                <DocTabText>4047: Conference &amp; Exp...</DocTabText>
                <svg width="9" height="9" viewBox="0 0 9 9"><path d="M1 1l7 7M8 1 1 8" stroke="#fff" strokeWidth="1.7" /></svg>
              </DocTab>
              <DocMenu />
            </DocStrip>
            <WorkRow>
              <Content>
                <Fieldset>
                  <Legend><Pin s={16} />Event</Legend>
                  <FieldRow>
                    <FieldCol $l={44} $i={81}>
                      <FieldLabel>Book #:</FieldLabel><Input $right>4047</Input>
                    </FieldCol>
                    <FieldGrip />
                    <FieldCol $l={74} $i={298}>
                      <FieldLabel>Event Name:*</FieldLabel><Input>Conference &amp; Expo</Input>
                      <FieldLabel>Client:*</FieldLabel>
                      <Input><InputText>Unilab Pharma</InputText><LookupBtn><Lookup /></LookupBtn></Input>
                    </FieldCol>
                    <FieldGrip />
                    <FieldCol $l={89} $i={195}>
                      <FieldLabel>Date Range:</FieldLabel><Input>Tue Jan 11 2022 to Thu Jan 13 2022</Input>
                      <FieldLabel>Event Manager:*</FieldLabel>
                      <Input $bg="#efe0fb" $ink="#111"><InputText>RJV</InputText><LookupBtn><Lookup /></LookupBtn></Input>
                    </FieldCol>
                    <FieldGrip />
                    <FieldCol $l={86} $i={132}>
                      <FieldLabel>Contract Status:</FieldLabel><Input $bg="#bebebe" $ink="#222">Not Required</Input>
                      <FieldLabel>Deposit Status:</FieldLabel><Input $bg="#bebebe" $ink="#222">Not Required</Input>
                    </FieldCol>
                    <FieldGrip />
                    <FieldCol $l={59} $i={193}>
                      <FieldLabel>Status:*</FieldLabel>
                      <Input $bg="#ffffc0" $ink="#222"><InputText>Tentative</InputText><LookupBtn><Lookup /></LookupBtn></Input>
                      <FieldLabel>Lock Level:</FieldLabel><Input $bg="#32cd32" $ink="#111">Open</Input>
                    </FieldCol>
                  </FieldRow>
                </Fieldset>

                <TabStrip>
                  <PageTab $w={100} $first><DetailPanel s={16} />Event Detail</PageTab>
                  <PageTab $w={85}><Crm s={16} />Contacts</PageTab>
                  <PageTab $w={92}><Badge s={16} color="#f00000" />Attendees</PageTab>
                  <PageTab $w={89}><Badge s={16} color="#3c50f0" />Exhibitors</PageTab>
                  <PageTab $w={79}><BedGreen s={16} />Lodging</PageTab>
                  <PageTab $w={122}><BedGreen s={16} />Accommodations</PageTab>
                  <PageTab $w={72}><Plane s={16} />Travel</PageTab>
                  <PageTab $w={82}><CalcGrey s={16} />Financial</PageTab>
                  <PageTab $w={121} $on><Bubble s={16} />Communications</PageTab>
                  <PageTab $w={68}><Clipboard s={16} check />Tasks</PageTab>
                  <PageTab $w={95}><PageClip s={16} />Documents</PageTab>
                  <PageTab $w={123}><LetterDoc s={16} />Letter Templates</PageTab>
                  <PageTab $w={77}><Picture s={16} />Images</PageTab>
                </TabStrip>

                <Panel>
                  <Toolbar>
                    <ToolBtn $w={34} $on><BlankPage s={16} /><Caret $dark /></ToolBtn>
                    <ToolSep $ml={3} />
                    <ToolBtn $w={34}><Flag s={16} /></ToolBtn>
                    <ToolBtn $w={16}><XRed s={15} /></ToolBtn>
                    <ToolSep $ml={8} />
                    <ToolBtn $w={32}><TableGrey s={16} /></ToolBtn>
                    <ToolSep />
                    <ToolBtn $w={41}><TableGreen s={16} /><Caret $dark /></ToolBtn>
                    <ToolBtn $w={20}><WindowArrow s={16} /></ToolBtn>
                    <ToolBtn $w={32}><AuditBook s={16} /></ToolBtn>
                    <ToolSep />
                    <ToolBtn $w={32}><Clipboard s={16} /></ToolBtn>
                    <ToolSep $ml={1} />
                    <ToolBtn $w={30}><RoundArrow s={15} up /></ToolBtn>
                    <ToolBtn $w={22}><RoundArrow s={15} /></ToolBtn>
                    <ToolSep $ml={6} />
                    <ToolBtn $w={40}><Funnel s={15} /><Caret $dark /></ToolBtn>
                    <ToolSep />
                    <Search><InputText>Text to search...</InputText><SearchBtn><Magnifier s={11} /></SearchBtn></Search>
                    <ToolSep $ml={11} />
                    <ToolBtn $w={30}><Floppy s={16} /></ToolBtn>
                    <ToolBtn $w={14}><Caret $dark /></ToolBtn>
                    <ToolSep $ml={5} />
                    <ToolBtn $w={32}><SearchDoc s={16} /></ToolBtn>
                  </Toolbar>

                  <GridWrap>
                    <GridHead>
                      <HeadCell />
                      <HeadCell>To</HeadCell>
                      <HeadCell>From Email</HeadCell>
                      <HeadCell $center><ExMark /></HeadCell>
                      <HeadCell>Subject</HeadCell>
                      <HeadCell>Event Quote</HeadCell>
                      <HeadCell>Date/Time<SortCaret /></HeadCell>
                      <HeadCell $flag><Flag s={14} /></HeadCell>
                    </GridHead>
                    <GroupRow />
                    <Row>
                      <Cell $end>Elizabeth C</Cell>
                      <Cell>manual@eventpro.net</Cell>
                      <Cell>aliciagriffoneventpro@gmail.com</Cell>
                      <Cell $center><Diamond /></Cell>
                      <Cell>Event: Conference &amp; Expo</Cell>
                      <Cell />
                      <Cell>Fri Nov 12 2021 @ 10:36 AM</Cell>
                      <Cell />
                    </Row>
                    <Row $sel>
                      <Cell $end>Elizabeth C</Cell>
                      <Cell $white>manual@eventpro.net</Cell>
                      <Cell>evpplanner@gmail.com</Cell>
                      <Cell $center><Diamond /></Cell>
                      <Cell>Your Event Booking Confirmation</Cell>
                      <Cell />
                      <Cell>Fri Nov 12 2021 @ 9:39 AM</Cell>
                      <Cell />
                    </Row>
                  </GridWrap>

                  <Menu>
                    <MenuGutter />
                    <MenuItem $h={24}><Envelope s={16} />Email - AXG Email</MenuItem>
                    <MenuItem $h={24}><Envelope s={16} />Email - Alicia Griffon</MenuItem>
                    <MenuRule />
                    <MenuItem $h={27}><Note s={16} />Note</MenuItem>
                    <MenuRule />
                    <MenuItem $h={25} $on><DocuSignIcon s={16} />DocuSign</MenuItem>
                  </Menu>
                </Panel>
              </Content>
              <Scroll>
                <ScrollUp><svg width="9" height="6" viewBox="0 0 9 6"><path d="M1 5l3.5-3.5L8 5" fill="none" stroke="#888" strokeWidth="1.6" /></svg></ScrollUp>
                <ScrollThumb />
              </Scroll>
            </WorkRow>
          </Main>
        </Work>
        <Status />
        <Arrow width="145" height="120" viewBox="270 394 145 120">
          <polygon points="277.3,401 305.7,411.7 302.2,416.5 406,503.3 406,508 398.3,506.7 298,421 292.3,427.7" fill="#ff0000" />
        </Arrow>
      </Win>
    </>
  );
}
